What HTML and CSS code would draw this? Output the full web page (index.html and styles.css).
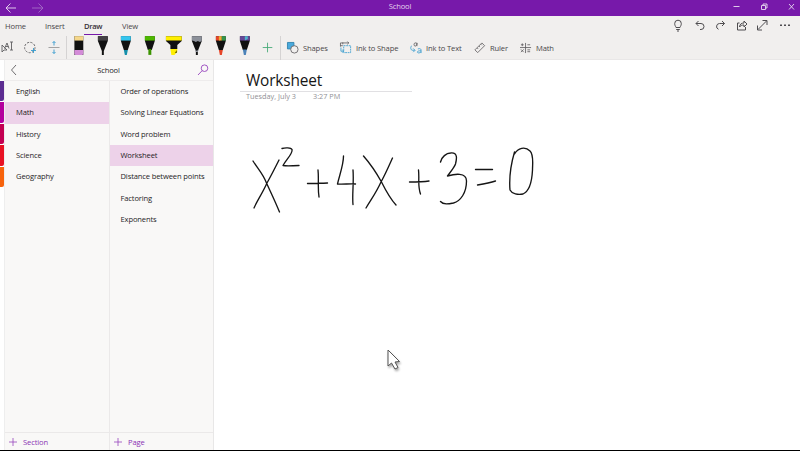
FILE: index.html
```html
<!DOCTYPE html>
<html lang="en">
<head>
<meta charset="utf-8">
<title>School</title>
<link rel="stylesheet" href="styles.css">
</head>
<body>
<div class="app">
  <header class="titlebar">
    <svg class="history" width="46" height="16" viewBox="0 0 46 16"><path d="M16 8H6M10.500 3.500L6 8l4.500 4.500"/><path class="dim" d="M32 8h11M38.500 3.500L43 8l-4.500 4.500"/></svg>
    <span class="window-title">School</span>
    <svg class="window-buttons" width="75" height="16" viewBox="0 0 75 16"><path d="M8.500 6.500h6M36.500 5.500h4v4h-4zM38 5V4h4v4h-1M64 4l5 5.500M69 4l-5 5.500"/></svg>
  </header>
  <div class="ribbon">
    <nav class="tabs">
      <span class="tab home">Home</span><span class="tab insert">Insert</span><span class="tab draw active">Draw</span><span class="tab view">View</span>
      <svg class="quick" width="125" height="20" viewBox="0 0 125 20"><path d="M6 11.500C5.500 10 4.700 9.500 4.700 7.500a3.300 3.300 0 0 1 6.600 0c0 2-.8 2.500-1.300 4zM6.200 13.500h3.600M7 15h2"/><path d="M28.500 5L26 7.500l2.500 2.500M26 7.500h5a3 3 0 1 1 0 6h-1"/><path d="M52 5l2.500 2.500L52 10M54.500 7.500h-5a3 3 0 0 0-1 5.800"/><path d="M69.500 7H67.500v7h8v-3M69.500 11c.3-3 2-4 4.500-4V5l3 3-3 3V9c-2 0-3.500.5-4.500 2z"/><path d="M88 13.500L96.500 5M92.500 4.500H97V9M87.500 9.500V14H92"/><path class="dots" d="M110 9.300h2M114 9.300h2M118 9.300h2"/></svg>
    </nav>
    <div class="tools">
      <svg class="select-tools" width="66" height="24" viewBox="0 0 66 24"><path d="M2 9v7l2-2h3zM4.500 12.500L7 7l2 5.500M5.500 10.500h3M10 6h3M11.500 6v8M10 14h3"/><circle cx="29.800" cy="11.500" r="5.200" stroke-dasharray="2.200 1.300"/><path class="blue" d="M31 14.500h5M33.500 12v5"/><path class="gray" d="M48.500 11.500h11"/><path class="blue" d="M54 5.500v4M54 13.500v4M52.500 7L54 5.500 55.500 7M52.500 16l1.500 1.500 1.500-1.500"/></svg>
      <div class="pens">
        <svg viewBox="0 0 24 20"><path d="M7.500 0h9v19h-9z"/><path fill="#f5d78b" d="M7.500 0h9v4.500h-9z"/><path fill="#d38bd7" d="M7.500 14h9v4l-1 1h-7l-1-1z"/></svg>
        <svg viewBox="0 0 24 20"><path d="M7 0h10v5l-4 10v4h-2v-4L7 5z"/><path fill="#444145" d="M7 0h10v4.500H7z"/></svg>
        <svg viewBox="0 0 24 20"><path d="M7 0h10v5l-3 9h-4L7 5z"/><path fill="#34c5ee" d="M7 0h10v4.500H7z"/><path fill="#168faa" d="M10 14h4l-1 5h-2z"/></svg>
        <svg viewBox="0 0 24 20"><path d="M7 0h10v5l-3 9h-4L7 5z"/><path fill="#4eb800" d="M7 0h10v4.500H7z"/><path fill="#3b9300" d="M10.500 13h3v6h-3z"/></svg>
        <svg viewBox="0 0 24 20"><path d="M4 0h16v5l-4.500 4v4h-7V9L4 5z"/><path fill="#ffef00" d="M4 0h16v4.500H4zM8.500 13h7v3l-3 3h-3z"/><path d="M13 17l2-3v3z" fill="#665e00"/></svg>
        <svg viewBox="0 0 24 20"><path d="M7 0h10v5l-4 10v4h-2v-4L7 5z"/><path fill="#8c9099" d="M7 0h10v5l-2 1-2-1-2 1-2-1-2-.5zM10 13l2 2 2-2-1 3h-2z"/></svg>
        <svg viewBox="0 0 24 20"><path d="M7 0h10v5l-3 9h-4L7 5z"/><path fill="#e64428" d="M7 0h4v4.500H7zM10 14h4l-1 5h-2z"/><path fill="#edac37" d="M10 0h3v4.500h-3z"/><path fill="#35944b" d="M13 0h4v4.500h-4z"/></svg>
        <svg viewBox="0 0 24 20"><path d="M7 0h10v5l-3 9h-4L7 5z"/><path fill="#644797" d="M7 0h10v4.500H7z"/><path fill="#4eb4cb" d="M12 0h3v3l-3 1.500z"/><path fill="#4b82b8" d="M10 13.500h4L13 19h-2z"/></svg>
      </div>
      <svg class="add-pen" width="25" height="24" viewBox="0 0 25 24"><path d="M7 11.500h10M12 6.500v10"/></svg>
      <div class="tool shapes"><svg viewBox="0 0 13 13"><path fill="#4aa9dc" stroke="#287eaa" d="M.5.500h7v7h-7z"/><circle cx="8" cy="8" r="4" fill="#f1efee"/></svg><span>Shapes</span></div>
      <div class="tool ink-shape"><svg viewBox="0 0 13 13"><path d="M.5 5V1h9M.5 4H3M3 .5v2M8-.5L9.500 1 8 2.500"/><path class="blue" d="M4 4h7.500v7.500H4z" stroke-dasharray="2 .7"/><path class="blue" d="M1 6v4h3M2.500 8.500L4 10l-1.500 1.500"/></svg><span>Ink to Shape</span></div>
      <div class="tool ink-text"><svg viewBox="0 0 13 13"><path d="M7 1H5.500C4 1 4 4.500 5.500 4.500S7.500 3 7.500 1v3.500"/><path class="blue" d="M2 4C.3 5 .3 9 3 9h2M3.500 7L5.500 9 3.500 11M8.500 7.500c3-1 3.500.5 3.500 1.500v3M12 9.500c-3 0-4 .5-4 1.500s2.500 1.500 4-.5"/></svg><span>Ink to Text</span></div>
      <div class="tool ruler"><svg viewBox="0 0 13 13"><path d="M1 8.500L8.500 1l3 3L4 11.500zM3.500 6.500l1 1M5.500 4.500l1 1M7.500 2.500l1 1"/></svg><span>Ruler</span></div>
      <div class="tool math"><svg viewBox="0 0 13 13"><path d="M0 6h12M6 1v11M1 3h3M2.500 1.500v3M8 3h3M1 8l3 3M4 8l-3 3M8 8.500h3M8 10.500h3"/></svg><span>Math</span></div>
    </div>
  </div>
  <main class="workspace">
    <div class="swatches"><i class="violet"></i><i class="magenta"></i><i class="crimson"></i><i class="red"></i><i class="orange"></i></div>
    <aside class="sidebar">
      <div class="notebook"><svg viewBox="0 0 12 12"><path d="M8 1L3.500 6 8 11"/></svg><span>School</span><svg class="purple" viewBox="0 0 12 12"><circle cx="7.500" cy="4.200" r="3.300"/><path d="M5.200 6.600L1 11"/></svg></div>
      <div class="columns">
        <div class="column sections"><ul><li><span>English</span></li><li class="selected"><span>Math</span></li><li><span>History</span></li><li><span>Science</span></li><li><span>Geography</span></li></ul><div class="add"><svg viewBox="0 0 9 9"><path d="M0 4.500h9M4.500 0v9"/></svg><span>Section</span></div></div>
        <div class="column pages"><ul><li><span>Order of operations</span></li><li><span>Solving Linear Equations</span></li><li><span>Word problem</span></li><li class="selected"><span>Worksheet</span></li><li><span>Distance between points</span></li><li><span>Factoring</span></li><li><span>Exponents</span></li></ul><div class="add"><svg viewBox="0 0 9 9"><path d="M0 4.500h9M4.500 0v9"/></svg><span>Page</span></div></div>
      </div>
    </aside>
    <section class="page">
      <h1>Worksheet</h1>
      <div class="stamp"><span class="date">Tuesday, July 3</span><span>3:27 PM</span></div>
      <svg class="ink" width="320" height="90" viewBox="240 135 320 90"><path d="M253 161c5 8 10 13 13.500 22 5 11 8 17 13 29M279 160c-3 6-7 14-12 23-5 11-10 18-13 25M282 148.500c3-1 9-1 10 1 1 4-5 9-9 16 5 1 10 0 16 0M307.500 183.500c7-.5 14 0 20-.5M318 170c1 9-.5 17 1 27M343.500 156c0 9-4 19-6 28 6 .5 12-.5 18 0M353 170c1 12-1 25 0 34.500M363.500 156c7 8 13 17 18 26 5 10 8 16 14.500 23M392.500 158c-4 9-7 16-11.500 24-5 11-9 16-15 26M409.500 182c7 0 13 0 19.500-1M418.500 170c1 9-1 16 2 24M440.500 162c1-5 6-9 10-9 8-1 6 7 5 11-1 3-5 8-8 12 7-2 19-4 19 5 0 12-6 20-13 22-5 1-10 2-13-1.500M475.500 169.500h17M477.500 185c6-1 12-2 18-4M514.500 152C511 164 509 178 510 190c2 4 8 5 13 4 7-3 9-14 9.500-24 0-7 1.500-15-2.500-19-5-5-12-3-15.500 3"/></svg>
    </section>
  </main>
  <footer class="edge"></footer>
  <svg class="cursor" width="20" height="26" viewBox="0 0 20 26"><path d="M4 2v16l3.500-3L11 21l3-1.500-3-5.500 4.500-.5z"/></svg>
</div>
</body>
</html>
```
FILE: styles.css
```css
* { box-sizing: border-box; }
body { margin: 0; font-family: "Open Sans", "Noto Sans", sans-serif; font-size: 7.6px; letter-spacing: -.14px; color: #1f1d1f; overflow: hidden; }
svg { fill: none; stroke: #5f5d60; stroke-width: .9; display: block; flex-shrink: 0; overflow: visible; }
.blue { stroke: #369bce; }
.gray { stroke: #999; }
.app { width: 800px; height: 451px; display: flex; flex-direction: column; position: relative; background: #fff; }
.titlebar { height: 16px; background: #7719aa; color: #e5d3ed; display: flex; align-items: flex-start; justify-content: space-between; }
.titlebar svg { stroke: #eadcf0; }
.history { width: 46px; }
.titlebar .dim { stroke: #a46dc5; }
.window-title { line-height: 13px; padding-left: 29px; }
.ribbon { height: 44px; background: #f1efee; border-bottom: 1px solid #e9e7e7; }
.tabs { height: 20px; display: flex; padding-left: 5px; line-height: 21px; color: #4a474a; }
.tab { height: 18.500px; }
.home { width: 40px; }
.insert { width: 39px; }
.draw { width: 18px; margin-right: 20px; }
.view { width: 22px; }
.active { color: #363037; font-weight: 600; letter-spacing: -.3px; border-bottom: 1.500px solid #7719aa; }
.quick { margin-left: auto; margin-right: 5px; stroke: #4f4d50; stroke-width: 1; }
.quick .dots { stroke-width: 1.5; }
.tools { height: 23px; display: flex; }
.pens { display: flex; width: 190px; border-left: 1px solid #d5d3d3; }
.pens svg { width: 23.7px; height: 20px; stroke: none; fill: #111; }
.add-pen { width: 25px; margin-right: 6px; border-right: 1px solid #d5d3d3; stroke: #43a975; }
.tool { display: flex; align-items: center; gap: 4px; height: 23px; color: #4a474a; white-space: nowrap; }
.tool svg { width: 12px; height: 12px; }
.shapes { width: 53px; }
.ink-shape { width: 70px; }
.ink-text { width: 64px; }
.ruler { width: 46px; }
.workspace { height: 390px; display: flex; }
.swatches { width: 4px; padding-top: 21px; display: flex; flex-direction: column; gap: 1px; }
.swatches i { height: 20.4px; border-radius: 0 0 2px 0; }
.violet { background: #5c2d91; }
.magenta { background: #b4009e; }
.crimson { background: #c30052; }
.red { background: #e81123; }
.orange { background: #f7630c; }
.sidebar { width: 210px; background: #f9f8f7; border-left: 1px solid #eee; border-right: 1px solid #e8e7e7; }
.notebook { height: 21px; border-bottom: 1px solid #eeecec; display: flex; align-items: center; justify-content: space-between; padding: 0 4px 0 3px; }
.notebook svg { width: 12px; height: 12px; }
.notebook .purple, .add svg { stroke: #9745bd; }
.columns { display: flex; height: 369px; }
.column { width: 104px; display: flex; flex-direction: column; }
.pages { border-left: 1px solid #ebe9e9; }
ul { list-style: none; margin: 0; padding: 0; }
li { height: 21.35px; display: flex; align-items: center; padding: 0 0 1.400px 11px; white-space: nowrap; }
.pages li { padding-left: 10.500px; }
.selected { background: #edd2e9; }
.add { margin-top: auto; height: 18px; border-top: 1px solid #ebe9e9; display: flex; align-items: center; padding-left: 4px; gap: 6px; color: #8b32b4; }
.add svg { width: 8px; height: 8px; }
.page { width: 586px; padding: 11px 0 0 26px; }
h1 { font-size: 15.4px; line-height: 20px; height: 21px; width: 172px; margin: 0; padding-left: 6px; border-bottom: 1px solid #e1e0e3; color: #161616; font-weight: 400; letter-spacing: -.15px; }
.stamp { height: 43px; padding-left: 6px; display: flex; line-height: 8.5px; color: #919095; font-size: 7.3px; letter-spacing: 0; }
.date { width: 67px; }
.ink { stroke: #151515; stroke-width: 1.35; stroke-linecap: round; stroke-linejoin: round; }
.edge { height: 1px; background: #000; }
.cursor { position: absolute; left: 384px; top: 348px; fill: #fff; stroke: #555; stroke-width: 1; filter: drop-shadow(1px 2px 1px #aaa); }
```
